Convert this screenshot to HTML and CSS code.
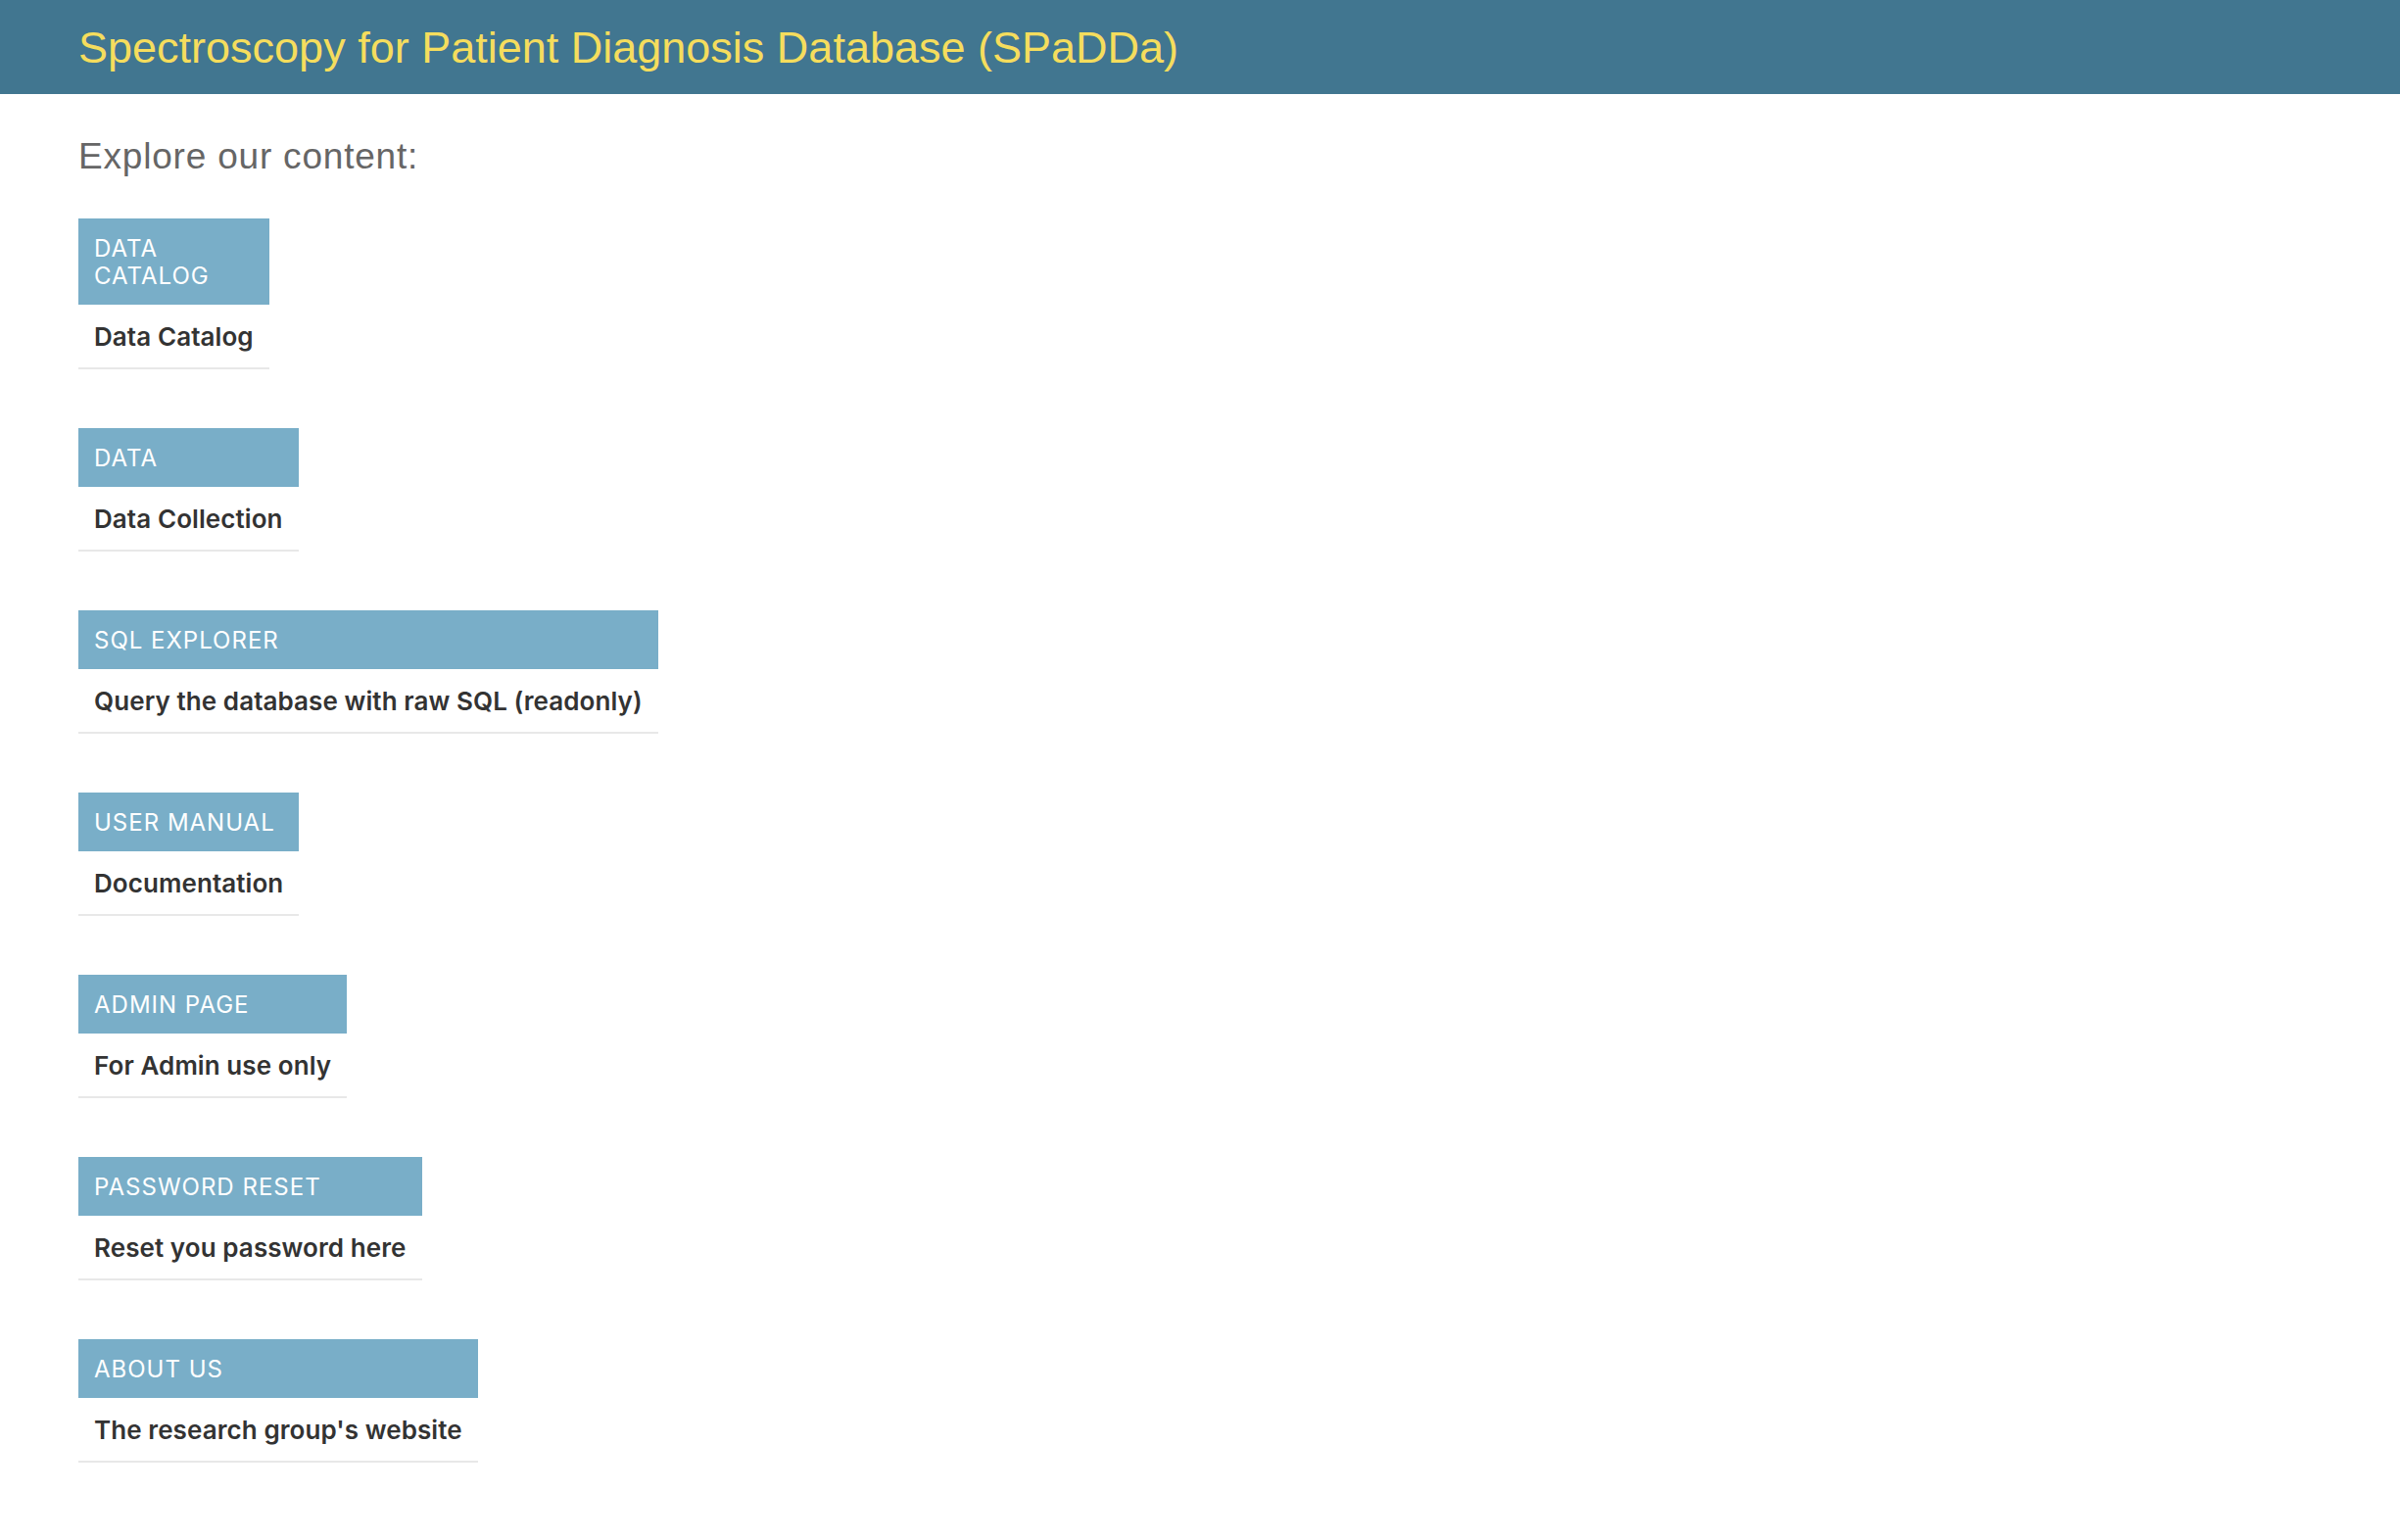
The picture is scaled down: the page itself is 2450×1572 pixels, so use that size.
FILE: index.html
```html
<!DOCTYPE html>
<html lang="en">
<head>
<meta charset="utf-8">
<title>SPaDDa</title>
<link rel="stylesheet" href="styles.css">
</head>
<body>
<header class="header">
  <h1 class="site-name">Spectroscopy for Patient Diagnosis Database (SPaDDa)</h1>
</header>
<main class="content">
  <h1 class="page-title">Explore our content:</h1>
  <div class="module">
    <table><caption>Data Catalog</caption><tr><th>Data Catalog</th></tr></table>
  </div>
  <div class="module">
    <table><caption>Data</caption><tr><th>Data Collection</th></tr></table>
  </div>
  <div class="module">
    <table><caption>SQL Explorer</caption><tr><th>Query the database with raw SQL (readonly)</th></tr></table>
  </div>
  <div class="module">
    <table><caption>User Manual</caption><tr><th>Documentation</th></tr></table>
  </div>
  <div class="module">
    <table><caption>Admin Page</caption><tr><th>For Admin use only</th></tr></table>
  </div>
  <div class="module">
    <table><caption>Password Reset</caption><tr><th>Reset you password here</th></tr></table>
  </div>
  <div class="module">
    <table><caption>About us</caption><tr><th>The research group's website</th></tr></table>
  </div>
</main>
</body>
</html>
```
FILE: styles.css
```css
html, body {
  margin: 0;
  padding: 0;
  background: #fff;
}
body {
  font-family: "Liberation Sans", Arial, sans-serif;
  color: #333;
}
.header {
  background: #417690;
  padding: 21px 80px 19px;
}
.site-name {
  margin: 0;
  font-size: 45px;
  line-height: 56px;
  font-weight: 400;
  color: #f5dd5d;
  font-family: "Liberation Sans", Arial, sans-serif;
}
.content {
  padding: 40px 80px;
}
.page-title {
  margin: 0 0 39px;
  font-size: 37px;
  line-height: 48px;
  font-weight: 400;
  letter-spacing: 0.8px;
  color: #666;
  font-family: "Liberation Sans", Arial, sans-serif;
}
.module {
  margin-bottom: 60px;
}
.module table {
  border-collapse: collapse;
  font-family: Inter, "Noto Sans", sans-serif;
}
.module caption {
  caption-side: top;
  text-align: left;
  background: #79aec8;
  color: #fff;
  padding: 17px 16px 15px;
  font-size: 24px;
  line-height: 28px;
  font-weight: 400;
  letter-spacing: 1px;
  text-transform: uppercase;
}
.module th {
  text-align: left;
  padding: 17px 16px 15px;
  font-size: 26px;
  line-height: 32px;
  font-weight: 600;
  letter-spacing: 0.08px;
  color: #333;
  border-bottom: 2px solid #e8e8e8;
  white-space: nowrap;
}
```
